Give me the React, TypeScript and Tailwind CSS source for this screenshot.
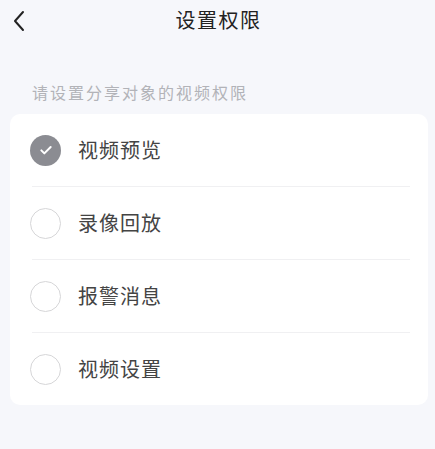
import { useState } from "react";

const options = ["视频预览", "录像回放", "报警消息", "视频设置"];

const cjk = { fontFamily: '"Noto Sans CJK SC", "Noto Sans", sans-serif' };

function Check({ checked }: { checked: boolean }) {
  if (checked) {
    return (
      <span className="flex h-[31px] w-[31px] shrink-0 items-center justify-center rounded-full bg-[#8b8c92]">
        <svg width="16" height="16" viewBox="0 0 24 24" fill="none" stroke="white" strokeWidth="3" strokeLinecap="round" strokeLinejoin="round">
          <path d="M5 12.5l4.5 4.5L19 7.5" />
        </svg>
      </span>
    );
  }
  return <span className="h-[31px] w-[31px] shrink-0 rounded-full border-[1.5px] border-[#d6d6d8]" />;
}

export default function App() {
  const [selected, setSelected] = useState<string[]>(["视频预览"]);

  const toggle = (name: string) =>
    setSelected((s) => (s.includes(name) ? s.filter((x) => x !== name) : [...s, name]));

  return (
    <div className="h-[449px] w-full overflow-hidden bg-[#f6f7fb]" style={cjk}>
      <header className="relative flex h-[40px] items-center justify-center">
        <button className="absolute left-[11px] top-[9px] text-[#222]" aria-label="返回">
          <svg width="16" height="24" viewBox="0 0 16 24" fill="none" stroke="currentColor" strokeWidth="2" strokeLinecap="round" strokeLinejoin="round">
            <path d="M12 3L4 12l8 9" />
          </svg>
        </button>
        <h1 className="pl-[2px] text-[20px] leading-none tracking-[1.5px] text-[#222]">设置权限</h1>
      </header>

      <p className="pl-[32px] pt-[41px] text-[16px] leading-[22px] tracking-[2px] text-[#b2b3b8]">
        请设置分享对象的视频权限
      </p>

      <div className="ml-[10px] mr-[7px] mt-[11px] rounded-[10px] bg-white">
        {options.map((name, i) => (
          <div key={name}>
            <button
              onClick={() => toggle(name)}
              className="flex h-[72px] w-full items-center gap-[17px] pl-[20px] text-left"
            >
              <Check checked={selected.includes(name)} />
              <span className="text-[20px] tracking-[1px] text-[#444]">{name}</span>
            </button>
            {i < options.length - 1 && <div className="ml-[22px] mr-[18px] h-px bg-[#f0f0f2]" />}
          </div>
        ))}
      </div>
    </div>
  );
}
